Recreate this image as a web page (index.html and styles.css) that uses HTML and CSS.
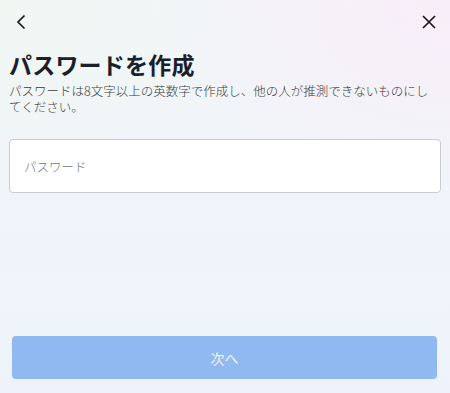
FILE: index.html
```html
<!DOCTYPE html>
<html lang="ja">
<head>
<meta charset="utf-8">
<link rel="stylesheet" href="styles.css">
</head>
<body>
<div class="page">
  <header class="topbar">
    <button class="icon-btn" aria-label="戻る">
      <svg width="12" height="16" viewBox="0 0 12 16"><path d="M9.5 1.5 L3 8 L9.5 14.5" fill="none" stroke="#1a1a1a" stroke-width="1.7"/></svg>
    </button>
    <button class="icon-btn" aria-label="閉じる">
      <svg width="14" height="14" viewBox="0 0 14 14"><path d="M1 1 L13 13 M13 1 L1 13" fill="none" stroke="#1a1a1a" stroke-width="1.7"/></svg>
    </button>
  </header>
  <h1 class="title">パスワードを作成</h1>
  <p class="desc">パスワードは8文字以上の英数字で作成し、他の人が推測できないものにしてください。</p>
  <div class="field">
    <span class="placeholder">パスワード</span>
  </div>
  <div class="spacer"></div>
  <button class="next">次へ</button>
</div>
</body>
</html>
```

FILE: styles.css
```css
* { box-sizing: border-box; }
html, body { margin: 0; padding: 0; height: 100%; }
body {
  font-family: "Noto Sans CJK JP", "Noto Sans", sans-serif;
  background:
    radial-gradient(ellipse 60% 50% at 100% 0%, rgba(249,236,248,0.85), rgba(249,236,248,0) 100%),
    radial-gradient(ellipse 60% 50% at 0% 0%, rgba(239,247,243,1), rgba(239,247,243,0) 100%),
    linear-gradient(180deg, #f3f5f8 0%, #eef3fb 100%);
  width: 450px;
  height: 393px;
  overflow: hidden;
}
.page {
  display: flex;
  flex-direction: column;
  height: 393px;
  padding: 0 9px 14px 9px;
}
.topbar {
  display: flex;
  justify-content: space-between;
  align-items: center;
  height: 44px;
  padding: 0 4px 0 4px;
}
.icon-btn {
  background: none;
  border: 0;
  padding: 0;
  width: 16px;
  height: 16px;
  display: flex;
  align-items: center;
  justify-content: center;
}
.title {
  margin: 4px 0 0 0;
  font-size: 23px;
  font-weight: 700;
  color: #18202b;
  line-height: 32px;
  letter-spacing: 0.2px;
}
.desc {
  margin: 3px 4px 0 0;
  font-size: 12.5px;
  line-height: 16px;
  font-weight: 300;
  color: #3c3c3c;
}
.field {
  margin-top: 24px;
  height: 54px;
  background: #fff;
  border: 1px solid #c9ccd4;
  border-radius: 4px;
  display: flex;
  align-items: center;
  padding-left: 14px;
}
.placeholder {
  font-size: 12.5px;
  font-weight: 300;
  color: #777;
}
.spacer { flex: 1; }
.next {
  margin: 0 4px 0 3px;
  height: 43px;
  border: 0;
  border-radius: 4px;
  background: #8fb9f0;
  color: #f4f8fe;
  font-family: "Noto Sans CJK JP", sans-serif;
  font-size: 14px;
}
```
